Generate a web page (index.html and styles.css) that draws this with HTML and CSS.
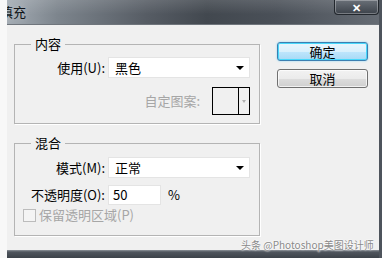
FILE: index.html
```html
<!DOCTYPE html>
<html lang="zh-CN">
<head>
    <meta charset="UTF-8">
    <title>填充</title>
    <link rel="stylesheet" href="styles.css">
</head>
<body>
    <div class="screen">
        <div class="side"></div>
        <div class="window">
            <div class="titlebar">
                <span class="title">填充</span>
                <div class="close">✕</div>
            </div>
            <div class="client">
                <div class="left">
                    <fieldset class="group group-content">
                        <legend>内容</legend>
                        <div class="row">
                            <span class="label">使用(U):</span>
                            <div class="combo"><span>黑色</span><i class="caret"></i></div>
                        </div>
                        <div class="row row-end">
                            <span class="label-off">自定图案:</span>
                            <div class="swatch"><span class="swatch-color"></span><span class="swatch-arrow"></span></div>
                        </div>
                    </fieldset>
                    <fieldset class="group group-blend">
                        <legend>混合</legend>
                        <div class="row">
                            <span class="label">模式(M):</span>
                            <div class="combo"><span>正常</span><i class="caret"></i></div>
                        </div>
                        <div class="row row-opacity">
                            <span class="label">不透明度(O):</span>
                            <div class="field">50</div>
                            <span class="unit">%</span>
                        </div>
                        <label class="check">
                            <input type="checkbox" disabled>
                            <span>保留透明区域(P)</span>
                        </label>
                    </fieldset>
                </div>
                <div class="buttons">
                    <button class="btn btn-default">确定</button>
                    <button class="btn">取消</button>
                </div>
            </div>
            <div class="bottom-frame"></div>
        </div>
    </div>
    <div class="watermark">头条 @Photoshop美图设计师</div>
</body>
</html>
```

FILE: styles.css
```css
body {
    margin: 0;
    font-family: "Noto Sans CJK SC", "Noto Sans", sans-serif;
    font-size: 13px;
    line-height: 16px;
    color: #000;
    background-color: #f8f8f8;
}
.screen {
    display: flex;
    width: 382px;
    height: 258px;
    overflow: hidden;
}
.side {
    width: 7px;
    flex: none;
    background-color: #f8f8f8;
}
.window {
    flex: 1;
    display: flex;
    flex-direction: column;
    border-right: 3px solid #4e545c;
}
.titlebar {
    height: 24px;
    flex: none;
    display: flex;
    overflow: hidden;
    background: linear-gradient(180deg, rgba(255,255,255,.12), rgba(0,0,0,0) 60%),
                linear-gradient(90deg, #a4acb4 0, #7d858d 50px, #565c64 140px, #42484f 200px, #4a5058 270px, #656b73 372px);
}
.title {
    margin-left: -7px;
    line-height: 23px;
    color: #101418;
    text-shadow: 0 0 6px rgba(255,255,255,.35);
}
.close {
    margin-left: auto;
    width: 43px;
    height: 14px;
    border: 1px solid #22272d;
    border-top: none;
    border-radius: 0 0 4px 4px;
    box-shadow: inset 0 0 0 1px rgba(255,255,255,.3);
    background: linear-gradient(180deg, #6a7078, #3c424a);
    color: #fff;
    font-size: 11px;
    font-weight: bold;
    line-height: 14px;
    text-align: center;
}
.client {
    flex: 1;
    display: flex;
    gap: 17px;
    padding-left: 7px;
    border-top: 1px solid #6f757c;
    background-color: #f0f0f0;
}
.left {
    width: 246px;
}
.group {
    margin: 11px 0 0;
    padding: 0;
    border: 1px solid #b4b4b4;
    box-shadow: 1px 1px 0 #fff;
}
.group legend {
    margin-left: 16px;
    padding: 0 4px;
    line-height: 16px;
}
.group-content {
    padding: 5px 9px 8px 0;
}
.group-blend {
    padding: 6px 9px 12px 0;
}
.row {
    display: flex;
    align-items: center;
}
.row-end {
    justify-content: flex-end;
    margin-top: 9px;
}
.label {
    width: 90px;
    margin-right: 3px;
    text-align: right;
    white-space: nowrap;
}
.label-off {
    margin-right: 12px;
    color: #a6a6a6;
}
.combo {
    position: relative;
    width: 134px;
    height: 19px;
    padding-left: 6px;
    border: 1px solid #e4e4e4;
    background-color: #fff;
    line-height: 19px;
}
.caret {
    position: absolute;
    right: 5px;
    top: 8px;
    border-left: 4px solid transparent;
    border-right: 4px solid transparent;
    border-top: 4px solid #000;
}
.swatch {
    display: flex;
    width: 36px;
    height: 26px;
    border: 1px solid #000;
}
.swatch-color {
    width: 25px;
    border-right: 1px solid #000;
}
.swatch-arrow {
    flex: 1;
    position: relative;
}
.swatch-arrow::after {
    content: "";
    position: absolute;
    left: 3px;
    top: 12px;
    border-left: 2px solid transparent;
    border-right: 2px solid transparent;
    border-top: 3px solid #b0b0b0;
}
.row-opacity {
    margin-top: 7px;
}
.field {
    width: 47px;
    height: 18px;
    padding-left: 4px;
    border: 1px solid #e4e4e4;
    background-color: #fff;
    line-height: 18px;
}
.unit {
    margin-left: 7px;
}
.check {
    display: flex;
    align-items: center;
    margin: 2px 0 0 8px;
    color: #a6a6a6;
}
.check input {
    appearance: none;
    width: 13px;
    height: 13px;
    margin: 0 3px 0 0;
    border: 1px solid #bcbcbc;
    background-color: #f4f4f4;
}
.buttons {
    display: flex;
    flex-direction: column;
    gap: 8px;
    width: 91px;
    margin-top: 17px;
}
.btn {
    height: 19px;
    padding: 0;
    font-family: inherit;
    font-size: 13px;
    line-height: 16px;
    border: 1px solid #707070;
    border-radius: 3px;
    background: linear-gradient(180deg, #f2f2f2 0, #ebebeb 50%, #dddddd 51%, #cfcfcf 100%);
    box-shadow: inset 0 0 0 1px rgba(255,255,255,.7);
}
.btn-default {
    border-color: #3c7fb1;
    background: linear-gradient(180deg, #eaf6fd 0, #d9f0fc 50%, #bee6fd 51%, #a7d9f5 100%);
    box-shadow: inset 0 0 0 1px #48d8fb, 0 0 2px #7fd4f5;
}
.bottom-frame {
    height: 8px;
    flex: none;
    background: linear-gradient(180deg, #8d939a 0, #4f555d 2px, #3c4249 100%);
}
.watermark {
    position: absolute;
    left: 241px;
    top: 238px;
    font-size: 10px;
    line-height: 13px;
    color: #8a8a8a;
    text-shadow: 0 0 2px #fff, 0 0 2px #fff;
    white-space: nowrap;
}
```
